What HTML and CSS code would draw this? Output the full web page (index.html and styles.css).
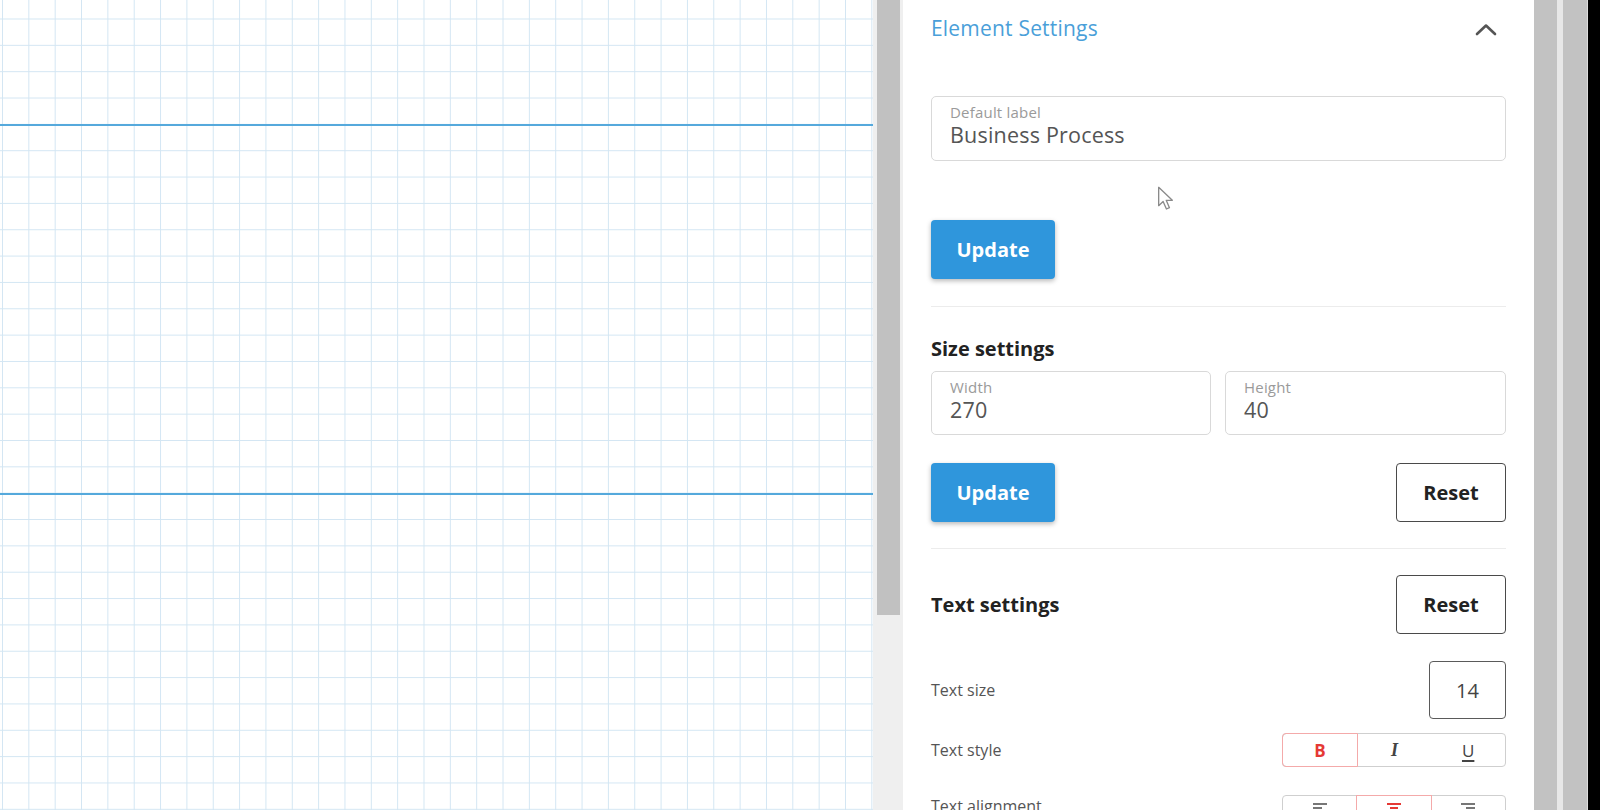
FILE: index.html
```html
<!DOCTYPE html>
<html lang="en">
<head>
<meta charset="utf-8">
<title>Element Settings</title>
<link rel="stylesheet" href="styles.css">
</head>
<body>
<div class="app">
  <div class="canvas">
    <div class="lane-line" style="top:124px"></div>
    <div class="lane-line" style="top:493px"></div>
  </div>
  <div class="scroll-track"><div class="scroll-thumb"></div></div>
  <aside class="panel">
    <div class="panel-header">
      <span class="panel-title">Element Settings</span>
      <svg class="chevron" width="22" height="13" viewBox="0 0 22 13"><path d="M2 11 L11 2.5 L20 11" fill="none" stroke="#555" stroke-width="2.6" stroke-linecap="round" stroke-linejoin="round"/></svg>
    </div>

    <div class="field field-wide">
      <span class="field-label">Default label</span>
      <span class="field-value">Business Process</span>
    </div>

    <div class="btn-row first-btn-row">
      <button class="btn btn-primary">Update</button>
    </div>

    <div class="divider first-divider"></div>

    <h3 class="section-title size-title">Size settings</h3>
    <div class="field-grid">
      <div class="field">
        <span class="field-label">Width</span>
        <span class="field-value">270</span>
      </div>
      <div class="field">
        <span class="field-label">Height</span>
        <span class="field-value">40</span>
      </div>
    </div>

    <div class="btn-row split">
      <button class="btn btn-primary">Update</button>
      <button class="btn btn-outline">Reset</button>
    </div>

    <div class="divider"></div>

    <div class="row text-title-row">
      <h3 class="section-title">Text settings</h3>
      <button class="btn btn-outline">Reset</button>
    </div>

    <div class="row size-row">
      <span class="row-label">Text size</span>
      <div class="num-box">14</div>
    </div>

    <div class="row style-row">
      <span class="row-label">Text style</span>
      <div class="seg-group">
        <span class="seg active"><b class="glyph-b">B</b></span>
        <span class="seg"><i class="glyph-i">I</i></span>
        <span class="seg"><u class="glyph-u">U</u></span>
      </div>
    </div>

    <div class="row align-row">
      <span class="row-label">Text alignment</span>
      <div class="seg-group">
        <span class="seg"><svg width="16" height="14" viewBox="0 0 16 14"><path d="M1 2h14M1 6h9M1 10h14" stroke="#777" stroke-width="2"/></svg></span>
        <span class="seg active"><svg width="16" height="14" viewBox="0 0 16 14"><path d="M1 2h14M4 6h8M1 10h14" stroke="#e53935" stroke-width="2"/></svg></span>
        <span class="seg"><svg width="16" height="14" viewBox="0 0 16 14"><path d="M1 2h14M6 6h9M1 10h14" stroke="#777" stroke-width="2"/></svg></span>
      </div>
    </div>

    <svg class="cursor" width="20" height="28" viewBox="0 0 18 24"><path d="M1.5 1.5 L1.5 18 L5.5 14.2 L8.5 21 L11.2 19.8 L8.3 13.2 L13.8 13.2 Z" fill="#fff" stroke="#8a8a8a" stroke-width="1.2" stroke-linejoin="round"/></svg>
  </aside>
  <div class="gutter g1"></div>
  <div class="gutter-sep"></div>
  <div class="gutter g2"></div>
  <div class="gutter-edge"></div>
  <div class="blackout"></div>
</div>
</body>
</html>
```

FILE: styles.css
```css
html, body {
  margin: 0;
  padding: 0;
  height: 100%;
  overflow: hidden;
  background: #fff;
}

body {
  font-family: "Open Sans", "Noto Sans", sans-serif;
  color: #333;
}

.app {
  display: flex;
  width: 1600px;
  height: 810px;
}

/* ---- drawing canvas ---- */
.canvas {
  position: relative;
  width: 873px;
  flex: none;
  height: 100%;
  background-color: #fff;
  background-image:
    linear-gradient(to right, #d3e6f3 1px, transparent 1px),
    linear-gradient(to bottom, #d3e6f3 1px, transparent 1px);
  background-size: 26.35px 26.35px;
  background-position: 2px 18.5px;
}

.lane-line {
  position: absolute;
  left: 0;
  right: 0;
  height: 2px;
  background: #55a9dc;
}

/* ---- canvas scrollbar ---- */
.scroll-track {
  width: 30px;
  flex: none;
  background: #efefef;
  padding-left: 4px;
  box-sizing: border-box;
}

.scroll-thumb {
  width: 23px;
  height: 615px;
  background: #c1c1c1;
}

/* ---- settings panel ---- */
.panel {
  position: relative;
  width: 631px;
  flex: none;
  box-sizing: border-box;
  padding: 0 28px;
  background: #fff;
}

.panel-header {
  height: 55px;
  display: flex;
  align-items: center;
  justify-content: space-between;
}

.panel-title {
  font-size: 21px;
  color: #4a9fd9;
  letter-spacing: 0.2px;
}

.chevron {
  margin-right: 9px;
  margin-top: 3px;
}

.field {
  box-sizing: border-box;
  border: 1px solid #d9d9d9;
  border-radius: 5px;
  padding: 6px 18px 0;
  display: flex;
  flex-direction: column;
  height: 64px;
}

.field-wide {
  margin-top: 41px;
  height: 65px;
}

.field-label {
  font-size: 15px;
  line-height: 18px;
  color: #9a9a9a;
  letter-spacing: 0.2px;
}

.field-value {
  font-size: 21.5px;
  line-height: 28px;
  color: #555;
  letter-spacing: 0.2px;
}

.field-grid {
  margin-top: 9px;
  display: grid;
  grid-template-columns: 280px 1fr;
  gap: 14px;
}

.btn-row {
  display: flex;
  margin-top: 28px;
}

.first-btn-row {
  margin-top: 59px;
}

.split {
  justify-content: space-between;
}

.btn {
  font-family: inherit;
  font-size: 20px;
  font-weight: 700;
  height: 59px;
  border-radius: 4px;
  cursor: pointer;
  padding: 0;
}

.btn-primary {
  width: 124px;
  border: none;
  background: #2f96dc;
  color: #fff;
  box-shadow: 0 2px 5px rgba(0, 0, 0, 0.28);
}

.btn-outline {
  width: 110px;
  border: 1px solid #4a4a4a;
  background: #fff;
  color: #222;
}

.divider {
  height: 1px;
  background: #ececec;
  margin-top: 26px;
}

.first-divider {
  margin-top: 27px;
}

.section-title {
  margin: 0;
  font-size: 20px;
  font-weight: 700;
  line-height: 26px;
  color: #222;
}

.size-title {
  margin-top: 29px;
}

.row {
  display: flex;
  align-items: center;
  justify-content: space-between;
}

.text-title-row {
  margin-top: 26px;
}

.size-row {
  margin-top: 27px;
}

.style-row {
  margin-top: 14px;
}

.align-row {
  margin-top: 28px;
  align-items: flex-start;
}

.row-label {
  font-size: 16px;
  line-height: 22px;
  color: #555;
}

.num-box {
  box-sizing: border-box;
  width: 77px;
  height: 58px;
  border: 1px solid #5a5a5a;
  border-radius: 4px;
  display: flex;
  align-items: center;
  justify-content: center;
  font-size: 20px;
  color: #444;
}

.seg-group {
  display: flex;
  width: 224px;
  height: 34px;
  box-sizing: border-box;
  border: 1px solid #cfcfcf;
  border-radius: 4px;
}

.seg {
  position: relative;
  flex: 1;
  display: flex;
  align-items: center;
  justify-content: center;
  font-size: 17px;
  color: #444;
}

.seg.active {
  margin: -1px 0;
  border: 1px solid #f4aaaa;
  z-index: 1;
}

.seg.active:first-child {
  margin-left: -1px;
  border-radius: 4px 0 0 4px;
}

.glyph-b {
  color: #e53935;
  font-weight: 700;
}

.glyph-i {
  font-family: "Liberation Serif", serif;
  font-weight: 700;
  font-size: 18px;
}

.glyph-u {
  text-decoration-thickness: 2px;
  text-underline-offset: 3px;
}

.align-row .seg svg {
  margin-top: -6px;
}

.cursor {
  position: absolute;
  left: 254px;
  top: 185px;
}

/* ---- window chrome on the right ---- */
.gutter {
  flex: none;
  background: #c2c2c2;
}

.g1 {
  width: 23px;
}

.gutter-sep {
  width: 6px;
  flex: none;
  background: #e7e7e7;
}

.g2 {
  width: 24px;
}

.gutter-edge {
  width: 1px;
  flex: none;
  background: #dcdcdc;
}

.blackout {
  flex: 1;
  background: #000;
}
```
